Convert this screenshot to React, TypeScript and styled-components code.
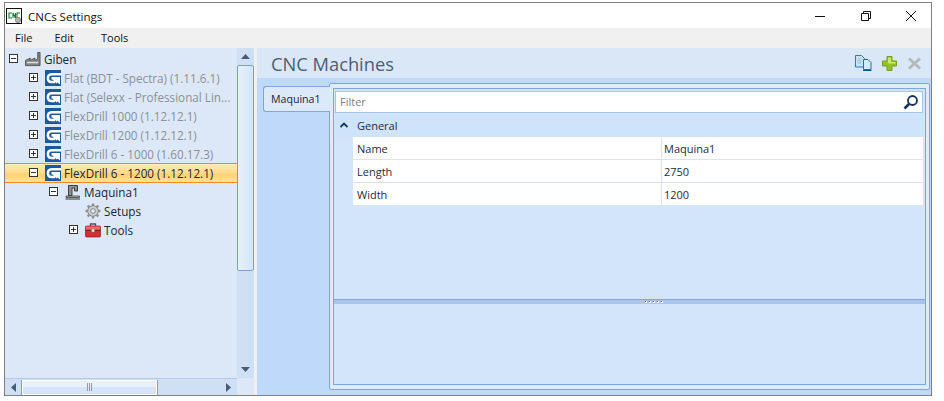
import React from "react";
import styled, { createGlobalStyle } from "styled-components";

const Global = createGlobalStyle`
  html, body { margin: 0; padding: 0; background: #fff; }
  #root { width: 944px; height: 401px; overflow: hidden; }
  * { box-sizing: border-box; }
`;
const Page = styled.div`
  width: 944px; height: 401px; padding: 2px 0 0 4px; background: #fff;
  font-family: "Open Sans", "Noto Sans", sans-serif; font-size: 11px; color: #1e2b3c;
`;
const Win = styled.div`
  width: 928px; height: 394px; border: 1px solid #7f7f7f; display: flex; flex-direction: column; background: #fff;
`;
const TitleBar = styled.div`
  height: 25px; flex: none; display: flex; align-items: center; background: #fff; padding: 1px 15px 0 1px;
`;
const AppIcon = styled.div`
  width: 16px; height: 16px; margin-right: 6px; flex: none; display: flex;
`;
const Title = styled.div`
  font-size: 11.5px; color: #111; flex: 1;
`;
const WinBtns = styled.div`
  display: flex; gap: 35.5px; align-items: center;
`;
const WinBtn = styled.div`
  width: 10px; height: 10px; display: flex;
`;
const MenuBar = styled.div`
  height: 20px; flex: none; display: flex; align-items: center; background: #f0f0f0; padding: 0 0 2px 10px; gap: 22px;
  font-size: 11px; color: #111;
  span:last-child { margin-left: 5px; }
`;
const Body = styled.div`
  flex: 1; min-height: 0; display: flex;
`;
const Left = styled.div`
  width: 249px; flex: none; display: grid; grid-template-columns: 232px 17px; grid-template-rows: 1fr 17px; background: #dce8f7;
`;
const Tree = styled.div`
  padding-top: 1px; min-width: 0; overflow: hidden;
`;
const Row = styled.div<{ $level: number; $sel?: boolean }>`
  height: 19px; display: flex; align-items: center; padding-left: ${p => 4 + p.$level * 20}px; white-space: nowrap;
  ${p => p.$sel ? `background: linear-gradient(#ffeebd, #ffdc8e 50%, #ffd272 60%, #ffe29c); box-shadow: inset 0 1px 0 #f98b1d, 0 1px 0 #f98b1d;` : ""}
`;
const Exp = styled.div`
  width: 9px; height: 9px; border: 1px solid #333; background: #fff; margin-right: 7px; flex: none; position: relative;
  &::before { content: ""; position: absolute; left: 1px; right: 1px; top: 3px; height: 1px; background: #333; }
`;
const ExpPlus = styled(Exp)`
  &::after { content: ""; position: absolute; top: 1px; bottom: 1px; left: 3px; width: 1px; background: #333; }
`;
const NoExp = styled.div`
  width: 16px; flex: none;
`;
const RowIcon = styled.div`
  width: 16px; height: 16px; flex: none; margin-right: 3px; display: flex;
`;
const Label = styled.span<{ $dim?: boolean }>`
  font-size: 11.7px; color: ${p => p.$dim ? "#8c9096" : "#1a2636"};
`;
const VBar = styled.div`
  background: #cfe0f5; display: flex; flex-direction: column; align-items: stretch;
`;
const ArrowBox = styled.div`
  height: 17px; flex: none; display: flex; align-items: center; justify-content: center;
`;
const HArrowBox = styled(ArrowBox)`
  width: 17px;
`;
const VThumb = styled.div`
  height: 206px; background: linear-gradient(90deg, #e8f1fb, #d5e4f6); border: 1px solid #fff; outline: 1px solid #7f9fcb; outline-offset: -1px; border-radius: 2px;
`;
const Spacer = styled.div`
  flex: 1;
`;
const HBar = styled.div`
  background: #cfdff4; border-top: 1px solid #b3cae8; display: flex; align-items: center;
`;
const HThumb = styled.div`
  width: 135px; height: 15px; background: linear-gradient(#e8f1fb 50%, #d5e4f6 50%); border: 1px solid #fff; box-shadow: -1px 0 0 #7f9fcb, 1px 0 0 #7f9fcb;
  display: flex; align-items: center; justify-content: center; gap: 1px;
  i { width: 1px; height: 8px; background: #7f9fcb; }
`;
const Corner = styled.div`
  background: #dce8f7;
`;
const Split = styled.div`
  width: 3px; flex: none; background: #eef0f2;
`;
const Right = styled.div`
  flex: 1; min-width: 0; display: flex; flex-direction: column; background: #bfd9fb;
`;
const Head = styled.div`
  height: 30px; flex: none; background: #dae7f7; display: flex; align-items: center; padding: 0 9px 0 14px;
`;
const HeadTitle = styled.div`
  flex: 1; font-size: 18.3px; color: #4a6078;
`;
const HeadIcons = styled.div`
  display: flex; gap: 10px; align-items: center;
`;
const Content = styled.div`
  flex: 1; min-height: 0; display: flex; padding: 5px 1px 5px 6px; align-items: stretch;
`;
const Tabs = styled.div`
  width: 67px; flex: none; padding-top: 3px; position: relative; z-index: 1;
`;
const Tab = styled.div`
  height: 26px; background: #dce9f9; border: 1px solid #7ea6db; border-right: none; border-radius: 3px 0 0 3px;
  padding-left: 7px; font-size: 10.6px; display: flex; align-items: center; color: #1c1c3c;
`;
const Outer = styled.div`
  flex: 1; min-width: 0; border: 1px solid #7ea6db; border-radius: 2px; background: #dfeafa; padding: 4px 3px 4px 3px; margin-left: -1px;
  display: flex;
`;
const Inner = styled.div`
  flex: 1; min-width: 0; border: 1px solid #7ea6db; background: #d3e5fb; display: flex; flex-direction: column; padding: 2px 2px 0 1px;
`;
const FilterBox = styled.div`
  height: 22px; flex: none; background: #fff; border: 1px solid #a9c6ea; display: flex; align-items: center; padding: 0 3px 0 4px;
  span { flex: 1; color: #7d7d7d; font-size: 11px; padding-bottom: 2px; }
`;
const Group = styled.div`
  height: 22px; margin-top: 2px; flex: none; background: #cfe3fb; display: flex; align-items: center; padding: 0 0 2px 5px; gap: 9px;
  font-size: 11px; color: #1e2b3c;
`;
const GridRow = styled.div`
  height: 23px; flex: none; margin-left: 18px; display: grid; grid-template-columns: 309px 1fr; background: #fff; border-bottom: 1px solid #dbe3ee;
  font-size: 11px; color: #1e2b3c;
`;
const Cell = styled.div<{ $last?: boolean }>`
  display: flex; align-items: center; padding-left: ${p => p.$last ? 2 : 4}px; ${p => p.$last ? "" : "border-right: 1px solid #dbe3ee;"}
`;
const GridArea = styled.div`
  flex: 1; min-height: 0;
`;
const Splitter = styled.div`
  height: 5px; flex: none; margin: 0 -2px 0 -1px; background: #abc5ea; border-top: 1px solid #7ea6db; display: flex; justify-content: center; align-items: center; gap: 2px; padding-left: 48px;
  i { width: 2px; height: 2px; background: linear-gradient(135deg, #1f6fd8 50%, #fff 50%); }
`;
const Bottom = styled.div`
  height: 80px; flex: none;
`;

const CncIcon = () => (
  <svg width="16" height="16" viewBox="0 0 16 16">
    <rect x=".5" y=".5" width="15" height="15" fill="#fff" stroke="#111" />
    <path d="M6 5H3v5h3M7 10V5l2.500 5V5M14 5h-3v5h3" fill="none" stroke="#0b7d2a" strokeWidth="1.100" />
    <circle cx="12" cy="12" r="2.600" fill="#b4b4b4" stroke="#8a8a8a" />
  </svg>
);
const Logo = () => (
  <svg width="16" height="16" viewBox="0 0 16 16">
    <rect width="16" height="16" fill="#1d5a99" />
    <path d="M16 4.300H6.500C4 4.300 2.900 6 2.900 8.200S4.200 12 6.500 12H10" fill="none" stroke="#fff" strokeWidth="2.500" />
    <path d="M6.500 7H15V14.500L12.500 12.500L11.500 13.500L7.500 9.500H6.500z" fill="#fff" />
  </svg>
);
const Factory = () => (
  <svg width="17" height="16" viewBox="0 0 17 16">
    <path d="M.5 15V9.500l5-2.500v2.500l5-2.500v2.500l3-1.500V1h2.500V15z" fill="#858585" stroke="#3c3c3c" strokeWidth=".8" />
    <path d="M2 11h12v1.500H2z" fill="#e2e2e2" />
  </svg>
);
const Machine = () => (
  <svg width="16" height="16" viewBox="0 0 16 16">
    <path d="M3.500 1.500h9v5.500H9.500V4H7v7.500H3.500z" fill="#8f8f8f" stroke="#3f3f3f" />
    <path d="M1 12h13.500v1.500H1z" fill="#b8b8b8" stroke="#3f3f3f" strokeWidth=".8" />
    <path d="M.5 14.500h14.500v1H.5z" fill="#333" />
  </svg>
);
const Gear = () => (
  <svg width="16" height="16" viewBox="0 0 16 16">
    <g stroke="#8f8f8f" strokeWidth="2.400">
      <path d="M8 .5v15M.5 8h15M2.700 2.700l10.600 10.600M13.300 2.700 2.700 13.300" />
    </g>
    <circle cx="8" cy="8" r="5.300" fill="#cdcdcd" stroke="#8a8a8a" />
    <circle cx="8" cy="8" r="2.400" fill="#dce8f7" stroke="#8a8a8a" />
  </svg>
);
const Toolbox = () => (
  <svg width="16" height="16" viewBox="0 0 16 16">
    <path d="M5.500 4V2h5V4" fill="none" stroke="#555" strokeWidth="1.300" />
    <rect x=".5" y="4" width="15" height="11" rx="1" fill="#cf3036" stroke="#92181d" strokeWidth=".7" />
    <rect x="1" y="4.500" width="14" height="3" fill="#ec6a6a" />
    <rect x="1" y="8" width="14" height="1" fill="#8f1a1e" />
    <rect x="6.500" y="7" width="3" height="3" fill="#e9e9e9" stroke="#777" strokeWidth=".5" />
  </svg>
);
const Copy = () => (
  <svg width="17" height="16" viewBox="0 0 17 16">
    <path d="M.5.500h6l3 3V12H.5z" fill="#c7e2f6" stroke="#1f7fc0" />
    <path d="M8.500 4.500h4.500l3 3v7H8.500z" fill="#d6ebf9" stroke="#1f6ea8" />
    <path d="M8 15.500h8.500" stroke="#12568c" />
    <path d="M2.500 4h3M2.500 6h4M2.500 8h4" stroke="#8fbfe0" />
  </svg>
);
const Plus = () => (
  <svg width="15" height="15" viewBox="0 0 15 15">
    <path d="M5 .5h5v4.500h4.500v5H10v4.500H5V10H.5V5H5z" fill="#93c126" stroke="#76a01c" />
    <path d="M6 1.500h3v4.500h4.500v1.500H6z" fill="#cbe86a" />
  </svg>
);
const Cross = () => (
  <svg width="15" height="13" viewBox="0 0 15 13">
    <path d="M2 1.500 13 11.500M13 1.500 2 11.500" stroke="#b4b9bf" strokeWidth="3" />
  </svg>
);
const Search = () => (
  <svg width="16" height="16" viewBox="0 0 16 16">
    <circle cx="9.500" cy="6.500" r="4.500" fill="#fff" stroke="#16335c" strokeWidth="1.800" />
    <path d="M6 10 1.500 14.500" stroke="#16335c" strokeWidth="2.600" />
  </svg>
);

const machines = [
  "Flat (BDT - Spectra) (1.11.6.1)",
  "Flat (Selexx - Professional Lin...",
  "FlexDrill 1000 (1.12.12.1)",
  "FlexDrill 1200 (1.12.12.1)",
  "FlexDrill 6 - 1000 (1.60.17.3)",
];

const rows = [["Name", "Maquina1"], ["Length", "2750"], ["Width", "1200"]];

export default function App() {
  return (
    <Page>
      <Global />
      <Win>
        <TitleBar>
          <AppIcon><CncIcon /></AppIcon>
          <Title>CNCs Settings</Title>
          <WinBtns>
            <WinBtn><svg width="10" height="10"><path d="M0 5.500h10" stroke="#111" /></svg></WinBtn>
            <WinBtn><svg width="10" height="10"><path d="M.5 2.500h7v7h-7zM2.500 2.500v-2h7v7h-2" fill="none" stroke="#111" /></svg></WinBtn>
            <WinBtn><svg width="10" height="10"><path d="M0 0l10 10M10 0 0 10" stroke="#111" /></svg></WinBtn>
          </WinBtns>
        </TitleBar>
        <MenuBar><span>File</span><span>Edit</span><span>Tools</span></MenuBar>
        <Body>
          <Left>
            <Tree>
              <Row $level={0}><Exp /><RowIcon><Factory /></RowIcon><Label>Giben</Label></Row>
              {machines.map(m => (
                <Row $level={1} key={m}><ExpPlus /><RowIcon><Logo /></RowIcon><Label $dim>{m}</Label></Row>
              ))}
              <Row $level={1} $sel><Exp /><RowIcon><Logo /></RowIcon><Label>FlexDrill 6 - 1200 (1.12.12.1)</Label></Row>
              <Row $level={2}><Exp /><RowIcon><Machine /></RowIcon><Label>Maquina1</Label></Row>
              <Row $level={3}><NoExp /><RowIcon><Gear /></RowIcon><Label>Setups</Label></Row>
              <Row $level={3}><ExpPlus /><RowIcon><Toolbox /></RowIcon><Label>Tools</Label></Row>
            </Tree>
            <VBar>
              <ArrowBox><svg width="9" height="5"><path d="M4.500 0 9 5H0z" fill="#4d5a75" /></svg></ArrowBox>
              <VThumb />
              <Spacer />
              <ArrowBox><svg width="9" height="5"><path d="M4.500 5 9 0H0z" fill="#4d5a75" /></svg></ArrowBox>
            </VBar>
            <HBar>
              <HArrowBox><svg width="5" height="9"><path d="M0 4.500 5 0v9z" fill="#4d5a75" /></svg></HArrowBox>
              <HThumb><i /><i /><i /></HThumb>
              <Spacer />
              <HArrowBox><svg width="5" height="9"><path d="M5 4.500 0 0v9z" fill="#4d5a75" /></svg></HArrowBox>
            </HBar>
            <Corner />
          </Left>
          <Split />
          <Right>
            <Head>
              <HeadTitle>CNC Machines</HeadTitle>
              <HeadIcons><Copy /><Plus /><Cross /></HeadIcons>
            </Head>
            <Content>
              <Tabs><Tab>Maquina1</Tab></Tabs>
              <Outer>
                <Inner>
                  <FilterBox><span>Filter</span><Search /></FilterBox>
                  <Group>
                    <svg width="8" height="6"><path d="M.5 5 4 1.500 7.500 5" fill="none" stroke="#16335c" strokeWidth="1.800" /></svg>
                    General
                  </Group>
                  {rows.map(([k, v]) => (
                    <GridRow key={k}><Cell>{k}</Cell><Cell $last>{v}</Cell></GridRow>
                  ))}
                  <GridArea />
                  <Splitter><i /><i /><i /><i /><i /></Splitter>
                  <Bottom />
                </Inner>
              </Outer>
            </Content>
          </Right>
        </Body>
      </Win>
    </Page>
  );
}
